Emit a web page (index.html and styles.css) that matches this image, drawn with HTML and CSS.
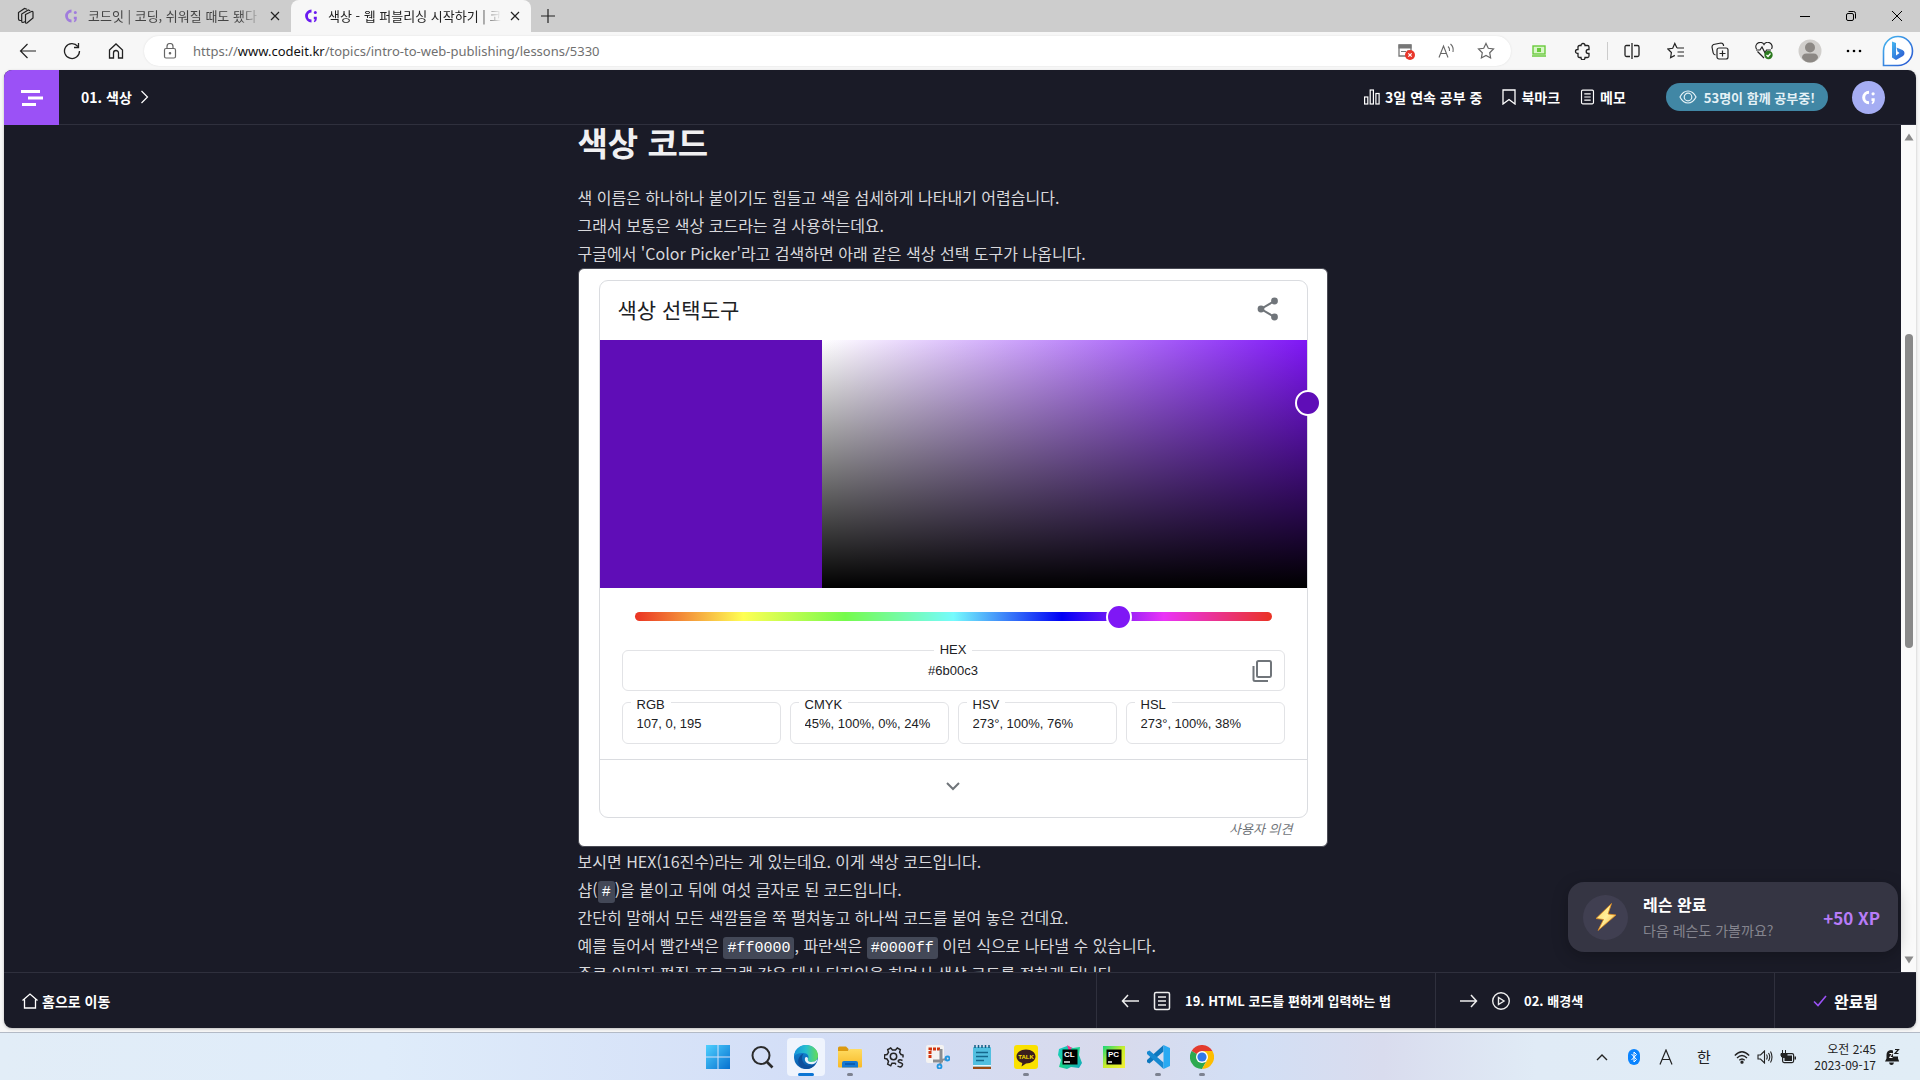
FILE: index.html
```html
<!DOCTYPE html>
<html lang="ko">
<head>
<meta charset="utf-8">
<title>색상 - 웹 퍼블리싱 시작하기 | 코드잇</title>
<link rel="stylesheet" href="styles.css">
</head>
<body>
<svg class="defs" width="0" height="0" aria-hidden="true">
  <defs>
    <symbol id="codeit" viewBox="0 0 14 14"><path d="M7.500 2A4.800 4.800 0 0 0 7.500 12" fill="none" stroke="currentColor" stroke-width="2.800"/><circle cx="11.300" cy="3.600" r="1.500" fill="currentColor"/><path d="M9.800 7.800h3v2.200q0 2.200-2.400 3.200l-.6-1q1-.8 1-2h-1z" fill="currentColor"/></symbol>
    <symbol id="close" viewBox="0 0 12 12"><path d="M2 2l8 8M10 2l-8 8" stroke="currentColor" stroke-width="1.200" fill="none"/></symbol>
    <symbol id="doc" viewBox="0 0 18 20"><rect x="1.500" y="1.500" width="15" height="17" rx="1.500" fill="none" stroke="currentColor" stroke-width="1.500"/><path d="M5 6h8M5 10h8M5 14h8" stroke="currentColor" stroke-width="1.500"/></symbol>
    <linearGradient id="gWin" x1="0" y1="0" x2="1" y2="1"><stop offset="0" stop-color="#4fd0ff"/><stop offset="1" stop-color="#0670cf"/></linearGradient>
    <linearGradient id="gEdge" x1="0" y1="0" x2="1" y2="0"><stop offset="0" stop-color="#1593db"/><stop offset=".5" stop-color="#26bfd0"/><stop offset="1" stop-color="#66dc55"/></linearGradient>
    <linearGradient id="gEdge2" x1="0" y1="0" x2="0" y2="1"><stop offset="0" stop-color="#1490df"/><stop offset="1" stop-color="#0a58a8"/></linearGradient>
    <linearGradient id="gFold" x1="0" y1="0" x2="0" y2="1"><stop offset="0" stop-color="#ffdc62"/><stop offset="1" stop-color="#f7b927"/></linearGradient>
    <linearGradient id="gCl" x1="0" y1="0" x2="1" y2="1"><stop offset="0" stop-color="#15c8d0"/><stop offset=".5" stop-color="#1bd38a"/><stop offset="1" stop-color="#12a4c8"/></linearGradient>
    <linearGradient id="gPc" x1="0" y1="0" x2="1" y2="1"><stop offset="0" stop-color="#19d67c"/><stop offset=".5" stop-color="#c8ee2c"/><stop offset="1" stop-color="#f5ef35"/></linearGradient>
    <linearGradient id="gBing" x1="0" y1="0" x2="1" y2="1"><stop offset="0" stop-color="#46b8f0"/><stop offset="1" stop-color="#2954d0"/></linearGradient>
    <linearGradient id="gBolt" x1="0" y1="0" x2="1" y2="1"><stop offset="0" stop-color="#ffd95a"/><stop offset=".5" stop-color="#fff09c"/><stop offset="1" stop-color="#f5a423"/></linearGradient>
  </defs>
</svg>

<div class="tabstrip">
  <button class="tab-actions" aria-label="탭 작업"><svg width="18" height="18" viewBox="0 0 18 18" fill="none" stroke="#222" stroke-width="1.200"><path d="M8.500 7.500l6-3q1.500-.3 1.500 1v5.500l-6 5q-1.500.8-1.500-1z"/><path d="M8.500 14.500L6 15.500q-1.300 0-1.300-1.300V7l6.500-4 2 .8M4.700 13.300L3 13.500q-1.500-.2-1.500-1.500V5.500L7.500 1.500l2.500.8"/></svg></button>
  <div class="tab">
    <svg class="tab-icon faded" width="14" height="14"><use href="#codeit"/></svg>
    <span class="tab-title">코드잇 | 코딩, 쉬워질 때도 됐다</span>
    <button class="tab-close" aria-label="닫기"><svg width="12" height="12"><use href="#close"/></svg></button>
  </div>
  <div class="tab active">
    <svg class="tab-icon" width="14" height="14"><use href="#codeit"/></svg>
    <span class="tab-title">색상 - 웹 퍼블리싱 시작하기 | 코드잇</span>
    <button class="tab-close" aria-label="닫기"><svg width="12" height="12"><use href="#close"/></svg></button>
  </div>
  <button class="new-tab" aria-label="새 탭"><svg width="16" height="16" viewBox="0 0 16 16"><path d="M8 1v14M1 8h14" stroke="#222" stroke-width="1.200"/></svg></button>
  <div class="window-buttons">
    <button aria-label="최소화"><svg width="12" height="12" viewBox="0 0 12 12"><path d="M1 6.500h10" stroke="#000"/></svg></button>
    <button aria-label="이전 크기로"><svg width="12" height="12" viewBox="0 0 12 12" fill="none" stroke="#000"><rect x="1.500" y="3.500" width="7" height="7" rx="1.500"/><path d="M3.500 1.500h5a2 2 0 0 1 2 2v5"/></svg></button>
    <button aria-label="창 닫기"><svg width="12" height="12" viewBox="0 0 12 12"><path d="M1 1l10 10M11 1L1 11" stroke="#000"/></svg></button>
  </div>
</div>

<div class="toolbar">
  <button class="tool" aria-label="뒤로"><svg width="18" height="18" viewBox="0 0 18 18" fill="none" stroke="#222" stroke-width="1.200"><path d="M8.500 2L1.500 9l7 7M1.500 9h15.500"/></svg></button>
  <button class="tool" aria-label="새로 고침"><svg width="18" height="18" viewBox="0 0 18 18" fill="none" stroke="#222" stroke-width="1.300"><path d="M16.500 9A7.500 7.500 0 1 1 14.800 4.300M15.500 1v4.500H11"/></svg></button>
  <button class="tool" aria-label="홈"><svg width="16" height="16" viewBox="0 0 16 16" fill="none" stroke="#222" stroke-width="1.300"><path d="M1.500 7L8 1l6.500 6v8h-4v-5a2 2 0 0 0-5 0v5h-4z"/></svg></button>
  <div class="address">
    <svg width="14" height="16" viewBox="0 0 14 16" fill="none" stroke="#666" stroke-width="1.200"><rect x="1.500" y="5.500" width="11" height="9.500" rx="1.500"/><path d="M4 5.500V3.500a3 3 0 0 1 6 0v2"/><circle cx="7" cy="10.200" r=".7" fill="#666"/></svg>
    <div class="url" role="textbox" aria-label="주소">https://<span>www.codeit.kr</span>/topics/intro-to-web-publishing/lessons/5330</div>
    <button aria-label="팝업 차단됨"><svg width="18" height="18" viewBox="0 0 18 18"><path d="M2 3h12v11H2z" fill="none" stroke="#777" stroke-width="1.300"/><path d="M1.500 2.500h13v4h-13z" fill="#777"/><path d="M4 9.500h5M11 8v3" stroke="#777"/><circle cx="13" cy="13" r="5" fill="#e8372c"/><path d="M11.300 11.300l3.400 3.400M14.700 11.300l-3.400 3.400" stroke="#fff" stroke-width="1.200"/></svg></button>
    <button aria-label="소리내어 읽기"><svg width="18" height="18" viewBox="0 0 18 18" fill="none" stroke="#666" stroke-width="1.100"><path d="M2 15.500L6.500 4l4.500 11.500M3.500 11.500h6M11 4.500q2 1.500 1.500 4.500M13.500 2q3.500 3 2.500 8"/></svg></button>
    <button aria-label="즐겨찾기 추가"><svg width="18" height="18" viewBox="0 0 18 18" fill="none" stroke="#666" stroke-width="1.200"><path d="M9 1.500l2.300 4.800 5.200.7-3.800 3.700.9 5.300L9 13.500 4.400 16l.9-5.300L1.500 7l5.200-.7z"/></svg></button>
  </div>
  <button class="tool" aria-label="확장 프로그램"><svg width="14" height="12" viewBox="0 0 14 12"><rect x="1" y="1" width="12" height="8" fill="#d8f6c8" stroke="#6acb3c" stroke-width="1.400"/><path d="M0 11h14" stroke="#6acb3c" stroke-width="1.500"/><path d="M5 3h4v4H5z" fill="#6acb3c"/></svg></button>
  <button class="tool" aria-label="확장"><svg width="18" height="18" viewBox="0 0 18 18" fill="none" stroke="#222" stroke-width="1.300"><path d="M5.500 3.500H7a2 2 0 0 1 4 0h2.500q1.500 0 1.500 1.500v2.500h-.8a2 2 0 0 0 0 4h.8V14q0 1.500-1.500 1.500H11v.3a2 2 0 0 1-4 0v-.3H5.500Q4 15.500 4 14v-2.500h-.5a2 2 0 0 1 0-4H4V5q0-1.500 1.500-1.500z"/></svg></button>
  <span class="tool-divider"></span>
  <button class="tool" aria-label="화면 분할"><svg width="16" height="16" viewBox="0 0 16 16" fill="none" stroke="#222" stroke-width="1.300"><path d="M6 2.500H2.500Q1 2.500 1 4v8q0 1.500 1.500 1.500H6M10 2.500h3.500Q15 2.500 15 4v8q0 1.500-1.500 1.500H10M8 0v16"/></svg></button>
  <button class="tool" aria-label="즐겨찾기"><svg width="18" height="18" viewBox="0 0 18 18" fill="none" stroke="#222" stroke-width="1.200"><path d="M10 6L7.800 1.500 5.700 6.300.9 7l3.500 3.500-.8 5.200 4.200-2.300M10 6h7M10.500 10h6.500M10.500 14h6.500"/></svg></button>
  <button class="tool" aria-label="컬렉션"><svg width="18" height="18" viewBox="0 0 18 18" fill="none" stroke="#222" stroke-width="1.200"><rect x="6" y="6" width="11" height="11" rx="2"/><path d="M11.500 8.500v6M8.500 11.500h6M4.500 13Q2.500 12.500 2.200 11L1 5q0-1.800 1.500-2.500L10 1q2 0 2.500 2v1"/></svg></button>
  <button class="tool" aria-label="브라우저 필수 요소"><svg width="18" height="18" viewBox="0 0 18 18" fill="none" stroke="#222" stroke-width="1.200"><path d="M9 16L2.500 9.500M1.500 7a4 4 0 0 1 7.500-4.500A4 4 0 0 1 16.500 7M1 8h4l2-3 3 6 1.500-3H16"/><circle cx="13.500" cy="13" r="4.200" fill="#2c7a1f" stroke="none"/><path d="M11.500 13l1.500 1.500 2.500-3" stroke="#fff"/></svg></button>
  <button class="tool profile" aria-label="프로필"><svg width="24" height="24" viewBox="0 0 24 24"><circle cx="12" cy="12" r="11.500" fill="#d1cfcc"/><circle cx="12" cy="8.500" r="5" fill="#8c8884"/><path d="M4 19q0-4.500 4.500-4.500h7q4.500 0 4.500 4.500-3 4.500-8 4.500t-8-4.500" fill="#8c8884"/></svg></button>
  <button class="tool more" aria-label="설정 및 기타"><svg width="16" height="4" viewBox="0 0 16 4"><circle cx="2" cy="2" r="1.300"/><circle cx="8" cy="2" r="1.300"/><circle cx="14" cy="2" r="1.300"/></svg></button>
  <button class="tool bing" aria-label="Bing"><svg width="32" height="32" viewBox="0 0 32 32"><path d="M1.500 30.500V16A14.500 14.500 0 1 1 16 30.500z" fill="#fff" stroke="url(#gBing)" stroke-width="1.600"/><path d="M10 6.500l4 1.500v12.500L17.500 18l-2-1.500-1-4L20.500 15q2 1 2 3t-1.500 3L14 25l-4-2.500z" fill="url(#gBing)"/></svg></button>
</div>

<div class="page">
  <header class="lesson-header">
    <button class="menu" aria-label="목차"><svg width="22" height="16" viewBox="0 0 22 16" fill="#fff"><path d="M0 0h19v3H0zM7 6.500h15v3H7zM1 13h14v3H1z"/></svg></button>
    <a class="crumb" href="#">01. 색상 <svg width="9" height="14" viewBox="0 0 9 14" fill="none" stroke="#fff" stroke-width="1.200"><path d="M1.500 1l6 6-6 6"/></svg></a>
    <nav class="header-links">
      <a href="#"><svg width="16" height="16" viewBox="0 0 16 16" fill="none" stroke="#fff" stroke-width="1.200"><rect x=".6" y="8" width="3.200" height="7"/><rect x="6.200" y="1" width="3.200" height="14"/><rect x="11.900" y="4.500" width="3.200" height="10.500"/></svg>3일 연속 공부 중</a>
      <a href="#"><svg width="14" height="16" viewBox="0 0 14 16" fill="none" stroke="#fff" stroke-width="1.300"><path d="M1 1h12v14l-6-4.500L1 15z"/></svg>북마크</a>
      <a href="#"><svg width="15" height="16" viewBox="0 0 18 20" color="#fff"><use href="#doc"/></svg>메모</a>
    </nav>
    <a class="together" href="#"><svg width="18" height="14" viewBox="0 0 18 14" fill="none" stroke="#e4f1f6" stroke-width="1.200"><path d="M1 7q3-6 8-6t8 6q-3 6-8 6T1 7z"/><circle cx="9" cy="7" r="3.800"/></svg>53명이 함께 공부중!</a>
    <a class="avatar" href="#" aria-label="내 계정"><svg width="15" height="15"><use href="#codeit"/></svg></a>
  </header>

  <div class="viewport">
    <main class="lesson">
      <article>
        <h1>색상 코드</h1>
        <p>색 이름은 하나하나 붙이기도 힘들고 색을 섬세하게 나타내기 어렵습니다.<br>그래서 보통은 색상 코드라는 걸 사용하는데요.<br>구글에서 'Color Picker'라고 검색하면 아래 같은 색상 선택 도구가 나옵니다.</p>
        <section class="figure">
          <div class="picker">
            <div class="picker-head">
              <h2>색상 선택도구</h2>
              <button aria-label="공유"><svg width="22" height="24" viewBox="0 0 22 24" fill="#70757a"><path d="M17.500 4L4 12l13.500 8" fill="none" stroke="#70757a" stroke-width="2"/><circle cx="17.500" cy="4" r="3.400"/><circle cx="4" cy="12" r="3.400"/><circle cx="17.500" cy="20" r="3.400"/></svg></button>
            </div>
            <div class="shades"><div class="swatch"></div><div class="plane"><span class="knob"></span></div></div>
            <div class="values">
              <input class="hue" type="range" min="0" max="360" value="278" aria-label="색조">
              <fieldset class="hex">
                <legend><label for="hex">HEX</label></legend>
                <div class="hex-row"><input id="hex" type="text" value="#6b00c3"><button aria-label="복사"><svg width="20" height="24" viewBox="0 0 20 24" fill="none" stroke="#70757a" stroke-width="2"><rect x="5" y="2" width="14" height="16" rx="1.500"/><path d="M1.500 7v13.500q0 1.500 1.500 1.500h13"/></svg></button></div>
              </fieldset>
              <div class="models">
                <fieldset><legend><label for="rgb">RGB</label></legend><input id="rgb" type="text" value="107, 0, 195"></fieldset>
                <fieldset><legend><label for="cmyk">CMYK</label></legend><input id="cmyk" type="text" value="45%, 100%, 0%, 24%"></fieldset>
                <fieldset><legend><label for="hsv">HSV</label></legend><input id="hsv" type="text" value="273°, 100%, 76%"></fieldset>
                <fieldset><legend><label for="hsl">HSL</label></legend><input id="hsl" type="text" value="273°, 100%, 38%"></fieldset>
              </div>
            </div>
            <button class="expand" aria-label="더보기"><svg width="14" height="9" viewBox="0 0 14 9" fill="none" stroke="#70757a" stroke-width="2"><path d="M1 1l6 6 6-6"/></svg></button>
          </div>
          <a class="feedback" href="#">사용자 의견</a>
        </section>
        <p>보시면 HEX(16진수)라는 게 있는데요. 이게 색상 코드입니다.<br>샵(<code>#</code>)을 붙이고 뒤에 여섯 글자로 된 코드입니다.<br>간단히 말해서 모든 색깔들을 쭉 펼쳐놓고 하나씩 코드를 붙여 놓은 건데요.<br>예를 들어서 빨간색은 <code>#ff0000</code>, 파란색은 <code>#0000ff</code> 이런 식으로 나타낼 수 있습니다.<br>주로 이미지 편집 프로그램 같은 데서 디자인을 하면서 색상 코드를 정하게 됩니다.</p>
      </article>
    </main>
    <div class="scrollbar" aria-hidden="true">
      <svg width="10" height="8" viewBox="0 0 10 8"><path d="M5 0.500l4.500 7h-9z" fill="#8a8a8a"/></svg>
      <div class="track"><div class="scroll-thumb"></div></div>
      <svg width="10" height="8" viewBox="0 0 10 8"><path d="M5 7.500l4.500-7h-9z" fill="#8a8a8a"/></svg>
    </div>
    <aside class="toast">
      <span class="bolt"><svg width="22" height="28" viewBox="0 0 22 28"><path d="M16.500 0.500L1 15.500l7.500 1L3 27.500 21 12l-8-1z" fill="url(#gBolt)" stroke="#e08a1e" stroke-width=".8"/></svg></span>
      <div class="toast-text"><strong>레슨 완료</strong><span>다음 레슨도 가볼까요?</span></div>
      <b class="xp">+50 XP</b>
    </aside>
  </div>

  <footer class="lesson-footer">
    <a class="home" href="#"><svg width="16" height="16" viewBox="0 0 16 16" fill="none" stroke="#fff" stroke-width="1.300"><path d="M.5 7.500L8 1l7.500 6.500M2.500 6.500V15h11V6.500"/></svg>홈으로 이동</a>
    <a class="step" href="#"><svg width="18" height="14" viewBox="0 0 18 14" fill="none" stroke="#eee" stroke-width="1.500"><path d="M7 1L1.500 7 7 13M1.500 7H18"/></svg><svg width="18" height="20" color="#eee"><use href="#doc"/></svg><span>19. HTML 코드를 편하게 입력하는 법</span></a>
    <a class="step" href="#"><svg width="18" height="14" viewBox="0 0 18 14" fill="none" stroke="#eee" stroke-width="1.500"><path d="M11 1l5.500 6-5.500 6M16.500 7H0"/></svg><svg width="18" height="20" viewBox="1 0 18 20" fill="none" stroke="#eee" stroke-width="1.400"><circle cx="10" cy="10" r="8.300"/><path d="M7.500 6.500v7l5.500-3.500z"/></svg><span>02. 배경색</span></a>
    <button class="done"><svg width="14" height="12" viewBox="0 0 14 12" fill="none" stroke="#9b51f6" stroke-width="1.600"><path d="M1 6.500l4 4L13 1"/></svg>완료됨</button>
  </footer>
</div>

<div class="taskbar">
  <div class="apps">
    <button aria-label="시작"><svg width="24" height="24" viewBox="0 0 24 24" fill="url(#gWin)"><path d="M0 0h11.500v11.500H0zM12.500 0H24v11.500H12.500zM0 12.500h11.500V24H0zM12.500 12.500H24V24H12.500z"/></svg></button>
    <button aria-label="검색"><svg width="24" height="24" viewBox="0 0 24 24" fill="none" stroke="#2b2b2b"><circle cx="11" cy="10.500" r="8.500" stroke-width="2"/><path d="M17 17l5.500 5.500" stroke-width="2.600"/></svg></button>
    <button class="current" aria-label="Edge"><svg width="24" height="24" viewBox="0 0 24 24"><circle cx="12" cy="12" r="12" fill="url(#gEdge2)"/><path d="M0 11.500C.5 4.500 6 0 12 0c7 0 12 5 12 10.500 0 4-2.500 6.500-6.500 6.500-3 0-4.500-1.500-3.500-3 1.500-2.500 0-6-5-6C4.500 8 1 9.500 0 11.500z" fill="url(#gEdge)"/><path d="M8 13c0 5 4 8.500 9 7.500 2-.3 3.500-1.200 4.500-1.500-2 3.500-5.500 5-9 5C7 24 3 18.500 4.500 14c1-3 3-5 5-5.500C8.500 10 8 11.500 8 13z" fill="#0c4f9c"/><path d="M14 14c-.8 1.500.7 3 3.500 3 2 0 4-.7 5.500-2.500l.3.500q-1 3.500-5 4.200c-5 .5-8.300-3-7.300-6.200.8-2 3-1 3 1z" fill="#e8f3fb"/></svg></button>
    <button class="running" aria-label="파일 탐색기"><svg width="24" height="24" viewBox="0 0 24 24"><path d="M0 3q0-1.500 1.500-1.500H8L10.500 4v4H0z" fill="#dc9a11"/><path d="M0 6h10l2-2h11q1 0 1 1v16.500q0 1-1 1H1q-1 0-1-1z" fill="url(#gFold)"/><path d="M4 22.500V18q0-2 2-2h12q2 0 2 2v4.500z" fill="#1479d3"/><path d="M7 19h10" stroke="#0a55a5" stroke-width="1.500"/></svg></button>
    <button aria-label="설정"><svg width="20" height="22" viewBox="0 0 20 22" fill="none" stroke="#252525" stroke-width="1.500"><path d="M12 18.500l-1-1.300H8l-1.300 2.600-3-1.700.8-2.800L3 13l-2.500-.6V9L3 8.500l1.500-2.200-.8-2.600 3-1.700L8.500 4h3l1.800-2 3 1.700-.7 2.600L17 8.500l2 .5v2.500"/><circle cx="9.500" cy="10.500" r="3.200"/><path d="M18.500 14.500q-3-1.500-4 0t2 2.300 1.500 3-4.500.2"/></svg></button>
    <button aria-label="캡처 도구"><svg width="24" height="24" viewBox="0 0 24 24" fill="none"><rect width="18" height="18" rx="2" fill="#f4f3f2"/><path d="M4 13V4h10" stroke="#d2330c" stroke-width="3" stroke-dasharray="3 1"/><path d="M15 4v12M7 16h10" stroke="#8b8d91" stroke-width="3"/><path d="M15 15l6-1M15 16l-1 4" stroke="#8b8d91" stroke-width="2"/><circle cx="21.500" cy="13.500" r="2" stroke="#2196e0" stroke-width="1.800"/><circle cx="13.500" cy="21.500" r="2" stroke="#2196e0" stroke-width="1.800"/></svg></button>
    <button aria-label="메모장"><svg width="20" height="24" viewBox="0 0 20 24"><rect x="1" y="2" width="18" height="20" rx="1" fill="#52bfe0"/><path d="M1 21.500h18V24H1z" fill="#9c4a12"/><path d="M1 20h18v1.500H1z" fill="#e9f6fb"/><path d="M3 0v3M6.500 0v3M10 0v3M13.500 0v3M17 0v3" stroke="#155e84" stroke-width="1.500"/><path d="M4 7.500h12M4 11.500h12M4 15.500h8" stroke="#14678c" stroke-width="1.600"/></svg></button>
    <button class="running" aria-label="카카오톡"><svg width="24" height="24" viewBox="0 0 24 24"><rect width="24" height="24" rx="3" fill="#fae100"/><path d="M12 4.500c5.500 0 9.500 3 9.500 7s-4 7-9.500 7l-4.500 3 .8-3.600C4.800 16.900 2.500 14.400 2.500 11.500c0-4 4-7 9.500-7z" fill="#3b1e1e"/><text x="12" y="14" text-anchor="middle" class="logo-talk">TALK</text></svg></button>
    <button aria-label="CLion"><svg width="24" height="24" viewBox="0 0 24 24"><path d="M1 4l8-3 6 2 7-1-1 8 3 8-3 5-8-1-4 2-8-2 2-7-3-5z" fill="url(#gCl)"/><path d="M9 0l5 3-3 3z" fill="#ff318c"/><rect x="4.500" y="4.500" width="15" height="15"/><text x="6" y="12" class="logo-ide">CL</text><path d="M6 17h6" stroke="#fff" stroke-width="1.400"/></svg></button>
    <button aria-label="PyCharm"><svg width="24" height="24" viewBox="0 0 24 24"><rect x="1" y="1" width="22" height="22" fill="url(#gPc)"/><rect x="4.500" y="4.500" width="15" height="15"/><text x="6" y="12" class="logo-ide">PC</text><path d="M6 17h4" stroke="#fff" stroke-width="1.400"/></svg></button>
    <button class="running" aria-label="Visual Studio Code"><svg width="24" height="24" viewBox="0 0 24 24"><path d="M17.500 0v6.500L3.500 18.500 1 17.200V15L17 .5z" fill="#0e77bd"/><path d="M17.500 24v-6.500L3.500 5.500 1 6.800V9l16 14.500z" fill="#1789d1"/><path d="M17.500 0L24 3v18l-6.500 3z" fill="#29aaf2"/></svg></button>
    <button class="running" aria-label="Chrome"><svg width="24" height="24" viewBox="0 0 24 24"><path d="M12 12L1.600 6A12 12 0 0 1 22.400 6z" fill="#e33b2e"/><path d="M12 12L1.600 6A12 12 0 0 0 12 24l5-9z" fill="#2da94f"/><path d="M12 6h10.400A12 12 0 0 1 12 24l5.200-9z" fill="#fdbd00"/><circle cx="12" cy="12" r="6" fill="#fff"/><circle cx="12" cy="12" r="4.600" fill="#3178e8"/></svg></button>
  </div>
  <div class="tray">
    <button class="tray-wide" aria-label="숨겨진 아이콘"><svg width="12" height="8" viewBox="0 0 12 8" fill="none" stroke="#222" stroke-width="1.400"><path d="M1 7l5-5 5 5"/></svg></button>
    <button class="tray-wide" aria-label="Bluetooth"><svg width="12" height="16" viewBox="0 0 12 16"><rect width="12" height="16" rx="6" fill="#0a84ff"/><path d="M3.500 5l5 5.500L6 13V3l2.500 2.500-5 5.500" fill="none" stroke="#fff"/></svg></button>
    <button class="tray-wide" aria-label="문자"><svg width="14" height="16" viewBox="0 0 14 16" fill="none" stroke="#222" stroke-width="1.200"><path d="M1 15.500L7 1l6 14.500M3 10.500h8"/></svg></button>
    <button class="ime">한</button>
    <button class="status" aria-label="네트워크, 볼륨, 배터리">
      <svg width="16" height="14" viewBox="0 0 16 14" fill="none" stroke="#222" stroke-width="1.300"><path d="M.8 5.500q7.200-7.500 14.400 0M3 8q5-5 10 0M5.300 10.300q2.700-2.600 5.400 0"/><circle cx="8" cy="12.200" r="1" fill="#222"/></svg>
      <svg width="16" height="14" viewBox="0 0 16 14" fill="none" stroke="#222" stroke-width="1.100"><path d="M1 5v4h2.500L7.500 13V1L3.500 5zM9.500 4.500q1.500 2.500 0 5M11.500 3q2.500 4 0 8M13.500 1.500q3 5.500 0 11"/></svg>
      <svg width="16" height="14" viewBox="0 0 16 14"><rect x="2.600" y="3.600" width="11" height="9" rx="1.500" fill="none" stroke="#222" stroke-width="1.200"/><rect x="4.500" y="5.500" width="7.500" height="5.500" fill="#222"/><path d="M14.500 6.500H16v3h-1.500z" fill="#222"/><path d="M2.500 0v3.500M5.500 0v3.500M1 3.500h6v2q0 2-3 2t-3-2z" stroke="#222" fill="#222"/></svg>
    </button>
    <button class="clock">오전 2:45<br>2023-09-17</button>
    <button class="bell" aria-label="알림"><svg width="16" height="18" viewBox="0 0 16 18"><path d="M1 13.500l1.500-3V7q0-4.500 4.500-5l2 .5v6h5v2l1.200 3zM5 14.500h5q-.5 2.500-2.500 2.500T5 14.500z" fill="#1c1c1c"/><path d="M11 1.500h3.500L11 5.500h3.500" fill="none" stroke="#1c1c1c" stroke-width="1.200"/><path d="M5.500 5.500h3l-3 4h3" fill="none" stroke="#fff"/></svg></button>
  </div>
</div>
</body>
</html>
```
FILE: styles.css
```css
* { box-sizing: border-box; }

body {
  margin: 0;
  height: 100vh;
  display: flex;
  flex-direction: column;
  overflow: hidden;
  background: #f7f7f7;
  color: #222;
  font-family: "Noto Sans CJK KR", "Noto Sans", sans-serif;
}

button {
  margin: 0;
  padding: 0;
  border: 0;
  background: none;
  color: inherit;
  font: inherit;
  display: flex;
  align-items: center;
  justify-content: center;
}

a { color: inherit; text-decoration: none; }
svg { display: block; flex: none; }
.defs { position: absolute; }

/* Browser tabs */
.tabstrip {
  height: 32px;
  flex: none;
  display: flex;
  background: #cdcdcd;
  font-size: 13px;
}
.tab-actions { width: 51px; }
.tab {
  width: 240px;
  padding: 0 10px 0 13px;
  display: flex;
  align-items: center;
  color: #444;
}
.tab.active {
  background: #f7f7f7;
  border-radius: 8px 8px 0 0;
  color: #222;
}
.tab-icon { color: #6a1bf0; }
.tab-icon.faded { opacity: 0.45; }
.tab-title {
  flex: 1;
  margin: 0 8px 0 10px;
  padding-bottom: 2px;
  overflow: hidden;
  white-space: nowrap;
  mask-image: linear-gradient(to right, #000 88%, transparent);
}
.tab-close { color: #222; }
.new-tab { width: 34px; }
.window-buttons {
  margin-left: auto;
  display: flex;
}
.window-buttons button { width: 46px; }

/* Browser toolbar */
.toolbar {
  height: 38px;
  flex: none;
  display: flex;
  align-items: center;
  gap: 12px;
  padding: 0 4px 0 12px;
}
.tool { width: 32px; height: 32px; }
.tool-divider {
  width: 1px;
  height: 18px;
  margin: 0 -4px;
  background: #ccc;
}
.profile, .bing { width: 36px; }
.more { width: 28px; }
.address {
  flex: 1;
  height: 30px;
  padding: 0 11px 0 19px;
  border-radius: 15px;
  background: #fff;
  box-shadow: 0 0 2px #ddd;
  display: flex;
  align-items: center;
  gap: 12px;
}
.address button { width: 28px; height: 28px; }
.url {
  flex: 1;
  margin-left: 4px;
  font: 13px/20px "Noto Sans", "Open Sans", sans-serif;
  color: #707070;
  white-space: nowrap;
}
.url span { color: #111; }

/* Lesson page */
.page {
  flex: 1;
  min-height: 0;
  margin: 0 4px 4px;
  display: flex;
  flex-direction: column;
  border-radius: 8px;
  overflow: hidden;
  background: #1a1b27;
  color: #fff;
  box-shadow: 0 1px 3px #bbb;
}
.lesson-header {
  height: 55px;
  flex: none;
  display: flex;
  align-items: center;
  padding-right: 31px;
  border-bottom: 1px solid #2f303d;
  font-size: 14px;
  font-weight: 700;
}
.menu {
  width: 55px;
  height: 55px;
  margin-bottom: -1px;
  background: #9b51f6;
}
.crumb {
  margin-left: 22px;
  display: flex;
  align-items: center;
  gap: 8px;
}
.header-links {
  margin-left: auto;
  display: flex;
  gap: 20px;
}
.header-links a {
  display: flex;
  align-items: center;
  gap: 5px;
}
.together {
  height: 28px;
  margin: 0 24px 0 40px;
  padding: 0 13px;
  display: flex;
  align-items: center;
  gap: 7px;
  border-radius: 14px;
  background: #4187a5;
  color: #e4f1f6;
  font-size: 13px;
}
.avatar {
  width: 33px;
  height: 33px;
  display: flex;
  align-items: center;
  justify-content: center;
  border-radius: 50%;
  background: #a5adf3;
}

.viewport {
  flex: 1;
  min-height: 0;
  position: relative;
  display: flex;
}
.lesson {
  flex: 1;
  overflow: hidden;
}
article {
  max-width: 750px;
  margin: 0 auto;
  color: #d8d8dc;
  font-size: 16px;
  line-height: 28px;
}
h1 {
  margin: 0 0 24px;
  color: #f0f0f2;
  font-size: 33px;
  font-weight: 700;
  line-height: 34px;
}
p { margin: 0; white-space: nowrap; }
code {
  padding: 3px 4px 2px;
  border-radius: 3px;
  background: #434857;
  color: #fff;
  font: 15px/18px "Liberation Mono", monospace;
}

/* Colour picker figure */
.figure {
  margin: 1px 0 0;
  padding: 11px 19px 0 20px;
  border: 1px solid #4a4b55;
  border-radius: 6px;
  background: #fff;
  color: #202124;
}
.picker {
  border: 1px solid #dadce0;
  border-radius: 9px;
}
.picker-head {
  height: 59px;
  padding: 0 28px 3px 18px;
  display: flex;
  align-items: center;
  justify-content: space-between;
}
.picker-head h2 {
  margin: 0;
  font-size: 21px;
  font-weight: 400;
}
.shades {
  height: 248px;
  display: grid;
  grid-template-columns: 222px 1fr;
}
.swatch { background: #5f0db7; }
.plane {
  position: relative;
  background:
    linear-gradient(to bottom, transparent, #000),
    linear-gradient(to right, #fff, #7f17f5);
}
.knob {
  position: absolute;
  top: 50px;
  right: -14px;
  width: 26px;
  height: 26px;
  border: 2px solid #fff;
  border-radius: 50%;
  background: #5f0db7;
}
.values {
  padding: 15px 22px;
  display: flex;
  flex-direction: column;
  border-bottom: 1px solid #dadce0;
  font: 13px/16px "Liberation Sans", Arial, sans-serif;
}
.hue {
  appearance: none;
  height: 26px;
  margin: 0 13px 13px;
  background: none;
}
.hue::-webkit-slider-runnable-track {
  height: 9px;
  border-radius: 5px;
  background: linear-gradient(to right, #ea3323, #ffff54 17%, #75fb4c 33%, #75fbfd 50%, #0000f5 67%, #ea33f7 83%, #ea3323);
}
.hue::-webkit-slider-thumb {
  appearance: none;
  width: 26px;
  height: 26px;
  margin-top: -8px;
  border: 2px solid #fff;
  border-radius: 50%;
  background: #7f17f5;
}
fieldset {
  min-width: 0;
  margin: 0;
  border: 1px solid #e2e3e6;
  border-radius: 6px;
}
.hex { padding: 0 12px 6px; }
.hex legend { margin: 0 auto; padding: 0 6px; }
.hex-row {
  height: 26px;
  display: grid;
  grid-template-columns: 1fr 20px;
  align-items: center;
  padding-left: 20px;
}
.values input[type="text"] {
  width: 100%;
  padding: 0;
  border: 0;
  background: none;
  color: inherit;
  font: inherit;
}
.hex-row input { text-align: center; }
.models {
  display: grid;
  grid-template-columns: repeat(4, 1fr);
  gap: 9px;
}
.models fieldset { padding: 0 0 10px 14px; }
.models legend { margin-left: -6px; padding: 6px 6px 0; }
.models input { display: block; height: 20px; }
.expand { width: 100%; height: 57px; padding-bottom: 4px; }
.feedback {
  display: block;
  padding: 0 15px 6px;
  color: #70757a;
  font-size: 13px;
  font-style: italic;
  line-height: 22px;
  text-align: right;
}

/* Scroll bar */
.scrollbar {
  width: 15px;
  padding: 8px 0;
  display: flex;
  flex-direction: column;
  align-items: center;
  background: #fafafa;
}
.track { flex: 1; padding-top: 193px; }
.scroll-thumb {
  width: 8px;
  height: 314px;
  border-radius: 4px;
  background: #8a8a8a;
}

.toast {
  position: absolute;
  right: 18px;
  bottom: 20px;
  width: 330px;
  height: 70px;
  padding: 0 18px 0 15px;
  display: flex;
  align-items: center;
  gap: 15px;
  border-radius: 16px;
  background: #353543;
  box-shadow: 0 4px 16px rgba(0, 0, 0, 0.25);
}
.bolt {
  width: 45px;
  height: 45px;
  display: flex;
  align-items: center;
  justify-content: center;
  border-radius: 50%;
  background: #403f51;
}
.toast-text {
  flex: 1;
  display: flex;
  flex-direction: column;
  line-height: 26px;
}
.toast-text strong { font-size: 16px; }
.toast-text span { color: #85858f; font-size: 14px; }
.xp { color: #b87cf8; font-size: 17px; }

.lesson-footer {
  height: 56px;
  flex: none;
  display: flex;
  border-top: 1px solid #2f303d;
  font-size: 14px;
  font-weight: 700;
}
.lesson-footer a { display: flex; align-items: center; }
.home { flex: 1; padding-left: 18px; gap: 4px; }
.step {
  width: 339px;
  padding-left: 24px;
  border-left: 1px solid #2f303d;
  gap: 14px;
  font-size: 13px;
}
.done {
  width: 142px;
  border-left: 1px solid #2f303d;
  gap: 7px;
  font-size: 16px;
}

/* Windows task bar */
.taskbar {
  height: 48px;
  flex: none;
  display: grid;
  grid-template-columns: 1fr auto 1fr;
  align-items: center;
  border-top: 1px solid #b3bac6;
  background: linear-gradient(to right, #e2edf7, #dfecfa 20%, #d3def7 42%, #d8daec 58%, #d2dff5 65%, #d9dcee 72%, #e0ebf6 80%, #e1edf6);
}
.apps {
  grid-column: 2;
  display: flex;
  gap: 6px;
}
.apps button {
  position: relative;
  width: 38px;
  height: 38px;
  border-radius: 4px;
}
.apps .current { background: #eff4fd; }
.apps .running::after,
.apps .current::after {
  content: "";
  position: absolute;
  bottom: 0;
  width: 6px;
  height: 3px;
  border-radius: 2px;
  background: #7d8290;
}
.apps .current::after { width: 16px; background: #0a74d4; }
.logo-talk { font: 900 6px "Liberation Sans", sans-serif; fill: #fae100; }
.logo-ide { font: 700 8px "Liberation Sans", sans-serif; fill: #fff; }
.tray {
  display: flex;
  align-items: center;
  justify-content: flex-end;
  padding-right: 20px;
  color: #222;
}
.tray-wide { width: 32px; height: 32px; }
.ime { width: 44px; font-size: 15px; }
.status { gap: 7px; padding: 0 8px; }
.clock {
  width: 72px;
  display: block;
  text-align: right;
  font-size: 12px;
  line-height: 16px;
}
.bell { margin-left: 8px; }
```
